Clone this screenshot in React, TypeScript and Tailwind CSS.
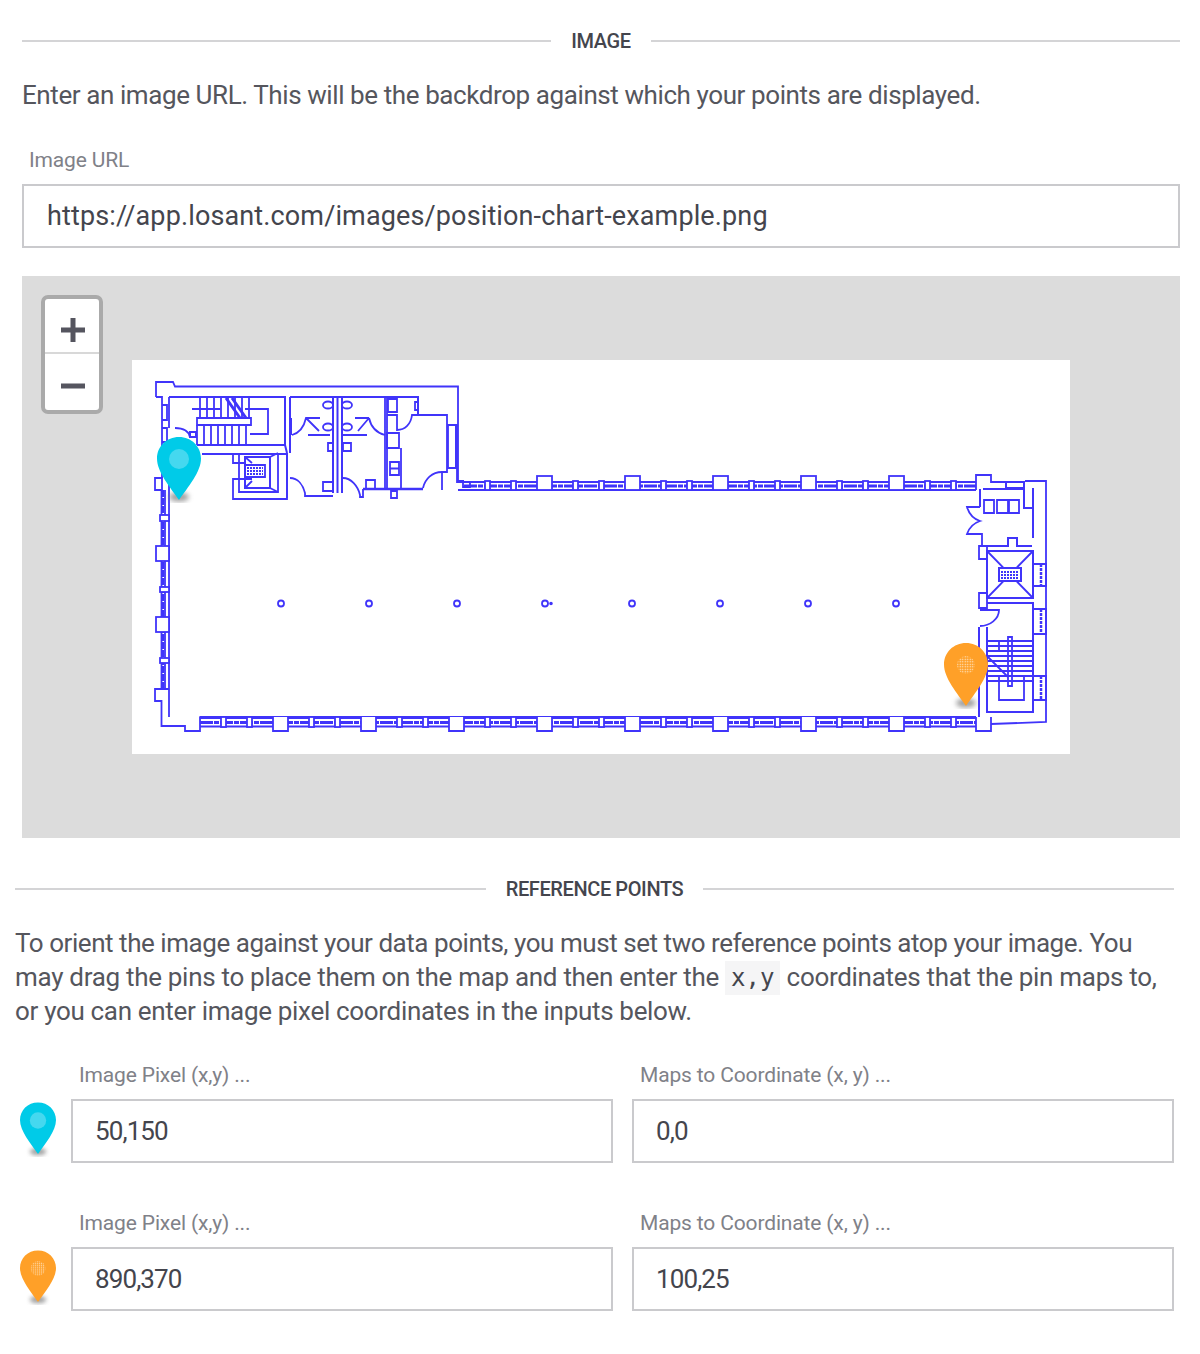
const font = { fontFamily: 'Roboto, sans-serif' };

const bottomPillars = [273, 361, 449, 537, 625, 713, 801, 889];
const topPillars = [537, 625, 713, 801, 889];
const columns = [281, 369, 457, 545, 632, 720, 808, 896];
const upperTreads = [200, 207, 214, 221, 228, 235, 242, 249];
const lowerTreads = [197, 204, 211, 218, 225, 232, 239, 246];
const rightTreads = [641, 646, 651, 656, 661, 666, 671, 676, 681];

function FloorPlan() {
  return (
    <svg viewBox="132 360 938 394" className="block h-[394px] w-[938px]" fill="none" stroke="#4034fa" strokeWidth="1.8">
      {/* outer shell, north wing */}
      <path d="M156 397V382H173L175 386.500H458V481H464M156 397H162V478M169 397V428M169 445V717H976M162 405H167V420H162M162 428H167V442H162" />
      <path d="M155 478H162V490H155Z" />

      {/* west wall */}
      <path d="M161.500 490V689M165 490V689" />
      <path d="M163 490V689" strokeWidth="2.500" strokeDasharray="7 1" />
      <rect x="160" y="515" width="9" height="6" fill="#fff" />
      <rect x="156" y="546" width="13" height="15" fill="#fff" />
      <rect x="160" y="587" width="9" height="5" fill="#fff" />
      <rect x="156" y="617" width="13" height="15" fill="#fff" />
      <rect x="160" y="658" width="9" height="5" fill="#fff" />
      <path d="M169 689H155V701H161.500V726H185V731H200V717" fill="#fff" />
      <path d="M169 689V717" />

      {/* south wall */}
      <path d="M200 718H976M200 726.500H976" />
      <path d="M200 722.500H976" strokeWidth="3" strokeDasharray="13 1 5 1" />
      {bottomPillars.map((x) => (
        <g key={x}>
          <rect x={x - 52} y="717" width="5" height="10" fill="#fff" />
          <rect x={x - 26} y="717" width="5" height="10" fill="#fff" />
          <path d={`M${x} 717V731H${x + 15}V717`} fill="#fff" />
        </g>
      ))}
      <rect x="925" y="717" width="5" height="10" fill="#fff" />
      <rect x="951" y="717" width="5" height="10" fill="#fff" />

      {/* north wall of the main floor */}
      <path d="M464 482H976M458 490H976" />
      <path d="M464 486H976" strokeWidth="3" strokeDasharray="13 1 5 1" />
      {topPillars.map((x) => (
        <g key={x}>
          <rect x={x - 52} y="481" width="5" height="9" fill="#fff" />
          <rect x={x - 26} y="481" width="5" height="9" fill="#fff" />
          <rect x={x} y="476" width="15" height="14" fill="#fff" />
        </g>
      ))}
      <rect x="925" y="481" width="5" height="9" fill="#fff" />
      <rect x="951" y="481" width="5" height="9" fill="#fff" />

      {/* column grid */}
      {columns.map((x) => (
        <circle key={x} cx={x} cy="603.500" r="3" />
      ))}
      <circle cx="551" cy="603.500" r="0.9" fill="#4034fa" />

      {/* stair room */}
      <path d="M169 397H285V445H197M285 445L287 453M175 428C184 428 189 432 190 437M190 432H196V437H190Z" strokeWidth="2" />
      {upperTreads.map((x) => (
        <path key={x} d={`M${x} 398V418`} />
      ))}
      {lowerTreads.map((x) => (
        <path key={x} d={`M${x} 425V445`} />
      ))}
      <path d="M197 418H251V425H197ZM192 409H220M245 409H268V434H250" />
      <path d="M226 398L240 418M232 398L246 418" strokeWidth="3" />

      {/* elevator core */}
      <path d="M202 454H287V499H233V479H252M233 453V463H245M239 453V492H278V453" />
      <path d="M245 457H270V488H245Z" strokeWidth="2" />
      <path d="M245 465H265V477H245Z" />
      <path d="M247 468H263M247 471H263M247 474H263" strokeDasharray="2 1" />
      <path d="M245 457L252 463M245 488L252 481M270 457L278 453M270 488L278 492" />

      {/* restrooms */}
      <path d="M290 397H418V415M290 397V453M291 418V435M333 397V493M342 397V493M337.500 397V493" strokeWidth="2" />
      <path d="M292 435C299 433 304 427 306 418H320M306 418L319 431M308 435H330M369 418H355M369 418L358 431M342 435H367M369 418C371 427 377 433 385 435" />
      <ellipse cx="328" cy="405" rx="5" ry="3.500" />
      <ellipse cx="347" cy="405" rx="5" ry="3.500" />
      <ellipse cx="328" cy="427" rx="5" ry="3.500" />
      <ellipse cx="347" cy="427" rx="5" ry="3.500" />
      <path d="M328 443H333V451H328ZM343 443H351V451H343ZM323 482H333V491H323Z" />
      <path d="M287 453V498M290 478C298 478 303 485 305 493V496H333M343 478C351 478 358 486 360 495V497H363V489" />
      <path d="M366 480H375V489H366ZM391 491H397V498H391Z" />

      {/* service rooms */}
      <path d="M385 397V490M387 397V490M387 415H397V430C405 430 411 424 412 415H447V472H442C432 472 425 479 423 488" />
      <path d="M363 489H423" strokeWidth="2.500" />
      <path d="M388 399H397V412H388ZM415 402H418V410H415ZM387 433H399V448H387ZM401 448V488M390 462H399V475H390ZM390 468.500H399" />
      <path d="M448 425H457V468H448Z" />
      <path d="M456 425V468" strokeWidth="2" />
      <path d="M442 472V490M457 468V482H464" />
      <path d="M463 482H470V487H463Z" />

      {/* east wing shell */}
      <path d="M976 490V475H991V482H1006M1025 481H1046V722L991 724" />
      <path d="M1006 482H1024V488H1006Z" strokeWidth="2" />
      <path d="M976 717V731H991V717" fill="#fff" />

      {/* washroom, east */}
      <path d="M983 489H1024V508H1033M1033 488V538M980 489V507M983 546H1008V538H1017V546H1032" strokeWidth="2" />
      <path d="M980 507H967C969 514 974 519 980 521C974 523 969 528 967 534H982V546M984 500H994V513H984ZM997 500H1008V513H997ZM1009 500H1019V513H1009Z" />
      <path d="M979 546H987V559H979ZM979 593H987V608H979Z" />

      {/* east elevator */}
      <path d="M987 551H1033V598H987Z" strokeWidth="2" />
      <path d="M988 552L1032 597M1032 552L988 597" />
      <rect x="999" y="568" width="22" height="13" fill="#fff" strokeWidth="2" />
      <path d="M1001 572H1019M1001 575H1019M1001 578H1019" strokeDasharray="2 1" />

      {/* east windows */}
      <path d="M1033 564H1046V586H1033ZM1033 609H1046V634H1033ZM1033 676H1046V700H1033Z" />
      <path d="M1041 564V586M1041 609V634M1041 676V700" strokeWidth="2.500" strokeDasharray="3 1" />

      {/* east stair */}
      <path d="M987 603H1033V712H987V627M979 627V717" strokeWidth="2" />
      <path d="M980 610H999C999 619 990 626 980 626" />
      {rightTreads.map((y) => (
        <path key={y} d={`M988 ${y}H1032`} />
      ))}
      <path d="M1008 637H1012V686H1008ZM999 677V700H1024V677M999 642V652M988 657L1008 677" strokeWidth="1.800" />
    </svg>
  );
}

function Pin({ color, small, dotted }: { color: string; small?: boolean; dotted?: boolean }) {
  return (
    <svg viewBox="0 0 44 66" className={small ? "block h-[55px] w-[36px]" : "block h-[66px] w-[44px]"}>
      <defs>
        <filter id="pin-shadow" x="-50%" y="-100%" width="200%" height="300%">
          <feGaussianBlur stdDeviation="2.500" />
        </filter>
        <pattern id="pin-dots" width="2.500" height="2.500" patternUnits="userSpaceOnUse">
          <circle cx="1.250" cy="1.250" r="0.700" fill="#fff0dc" />
        </pattern>
      </defs>
      <ellipse cx="22" cy="60" rx="10" ry="4.500" fill="#777" opacity="0.7" filter="url(#pin-shadow)" />
      <path d="M22 0C34.500 0 44 9.500 44 21.500C44 35 31 50 22 63C13 50 0 35 0 21.500C0 9.500 9.500 0 22 0Z" fill={color} />
      <circle cx="22" cy="22" r={dotted ? 9 : 10} fill={dotted ? "url(#pin-dots)" : "#45d8ef"} />
    </svg>
  );
}

function SectionTitle({ title }: { title: string }) {
  return (
    <div className="flex items-center gap-[20px]">
      <div className="h-[2px] flex-1 bg-[#d4d4d6]" />
      <h2 className="text-[20px] leading-[28px] font-medium tracking-[-0.4px] text-[#44454d] uppercase">{title}</h2>
      <div className="h-[2px] flex-1 bg-[#d4d4d6]" />
    </div>
  );
}

function Field({ label, value, wide }: { label: string; value: string; wide?: boolean }) {
  return (
    <div className="flex-1">
      <label className={`block text-[21px] leading-[28px] tracking-[-0.15px] text-[#808188] ${wide ? "pl-[7px]" : "pl-[8px]"}`}>{label}</label>
      <input
        readOnly
        value={value}
        className={`mt-[10px] block h-[64px] w-full border-2 border-[#cacacd] bg-white text-[#44454d] outline-none ${
          wide ? "px-[23px] text-[27px] tracking-[0.13px]" : "px-[22px] text-[26px] tracking-[-0.9px]"
        }`}
      />
    </div>
  );
}

function PointRow({ color, dotted, pixel, coord }: { color: string; dotted?: boolean; pixel: string; coord: string }) {
  return (
    <div className="flex items-end gap-[15px] pl-[5px]">
      <div className="mb-[6px] w-[36px] shrink-0">
        <Pin color={color} small dotted={dotted} />
      </div>
      <div className="flex flex-1 gap-[19px]">
        <Field label="Image Pixel (x,y) ..." value={pixel} />
        <Field label="Maps to Coordinate (x, y) ..." value={coord} />
      </div>
    </div>
  );
}

export default function App() {
  return (
    <div className="min-h-[1354px] w-[1200px] overflow-hidden bg-white pt-[27px]" style={font}>
      <section className="pr-[20px] pl-[22px]">
        <SectionTitle title="Image" />
        <p className="mt-[23px] whitespace-nowrap text-[26px] leading-[34px] tracking-[-0.41px] text-[#55565d]">
          Enter an image URL. This will be the backdrop against which your points are displayed.
        </p>
        <div className="mt-[34px]">
          <Field label="Image URL" value="https://app.losant.com/images/position-chart-example.png" wide />
        </div>
        <div className="relative mt-[28px] flex h-[562px] justify-center bg-[#dcdcdc] pt-[84px]">
          <div className="absolute top-[19px] left-[19px] flex h-[119px] w-[62px] flex-col overflow-hidden rounded-[7px] border-4 border-[#aaaaaa] bg-white">
            <button className="flex h-[55px] items-center justify-center border-b-2 border-[#d8d8d8] pt-[8px] pl-[1px]">
              <svg width="24" height="24" viewBox="0 0 24 24" fill="none" stroke="#55555f" strokeWidth="5">
                <path d="M0 12H24M12 0V24" />
              </svg>
            </button>
            <button className="flex flex-1 items-center justify-center pt-[8px] pl-[1px]">
              <svg width="24" height="24" viewBox="0 0 24 24" fill="none" stroke="#55555f" strokeWidth="5">
                <path d="M0 12H24" />
              </svg>
            </button>
          </div>
          <div className="h-[394px] w-[938px] bg-white">
            <FloorPlan />
          </div>
          <div className="absolute top-[161px] left-[135px]">
            <Pin color="#00cbe8" />
          </div>
          <div className="absolute top-[367px] left-[922px]">
            <Pin color="#ffa028" dotted />
          </div>
        </div>
      </section>

      <section className="mt-[37px] pr-[26px] pl-[15px]">
        <SectionTitle title="Reference Points" />
        <p className="mt-[23px] text-[26px] leading-[34px] text-[#55565d]">
          <span className="block whitespace-nowrap tracking-[-0.45px]">
            To orient the image against your data points, you must set two reference points atop your image. You
          </span>
          <span className="block whitespace-nowrap tracking-[-0.3px]">
            may drag the pins to place them on the map and then enter the{" "}
            <code className="bg-[#f5f5f6] px-[6px] py-[3px] text-[24px] leading-none tracking-normal text-[#44454d]" style={{ fontFamily: '"DejaVu Sans Mono", monospace' }}>
              x,y
            </code>{" "}
            coordinates that the pin maps to,
          </span>
          <span className="block whitespace-nowrap tracking-[-0.32px]">or you can enter image pixel coordinates in the inputs below.</span>
        </p>
        <div className="mt-[33px] flex flex-col gap-[46px]">
          <PointRow color="#00cbe8" pixel="50,150" coord="0,0" />
          <PointRow color="#ffa028" dotted pixel="890,370" coord="100,25" />
        </div>
      </section>
    </div>
  );
}
